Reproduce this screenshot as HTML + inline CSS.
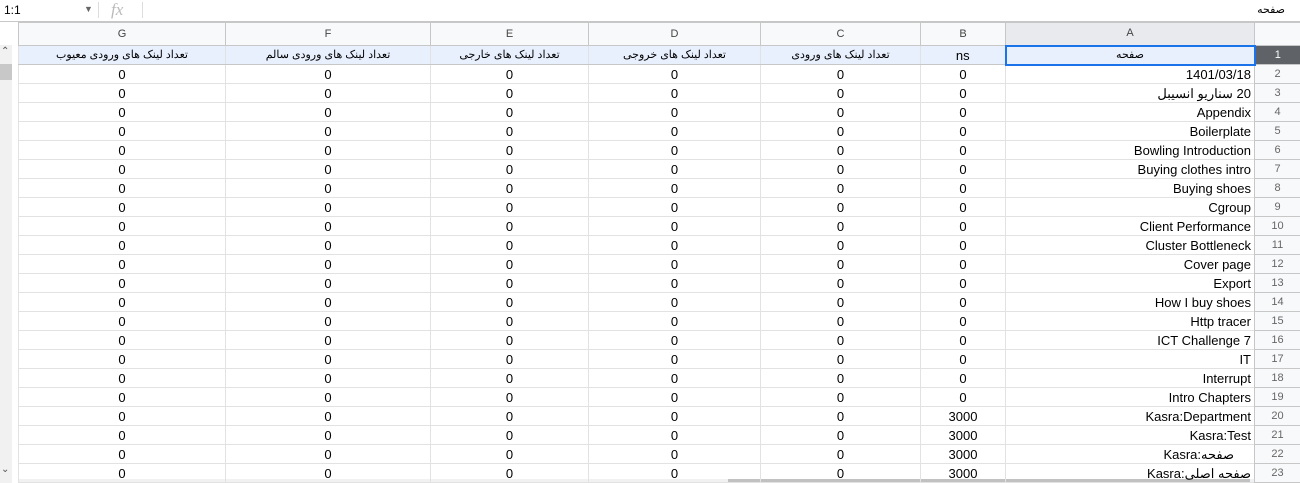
<!DOCTYPE html>
<html><head><meta charset="utf-8"><style>
*{margin:0;padding:0;box-sizing:border-box}
body{width:1300px;height:483px;overflow:hidden;background:#fff;font-family:"Liberation Sans","Noto Sans CJK SC",sans-serif;position:relative}
.fb{position:absolute;left:0;top:0;width:1300px;height:22px;border-bottom:1px solid #c7c7c7;font-size:12px}
table{position:absolute;left:18px;top:22px;width:1282px;border-collapse:collapse;table-layout:fixed;direction:rtl}
td{height:19px;border:1px solid #e2e2e2;font-size:13px;color:#000;text-align:center;white-space:nowrap;overflow:hidden;padding:0 3px;line-height:17px}
tr.h td{height:23px;background:#f8f9fa;color:#444;font-size:11px;border-color:#c7c7c7}
tr.r1 td{background:#e8f0fe;font-size:11px;border-bottom:1px solid #c7c7c7}
td.n{background:#f8f9fa;color:#666;font-size:11px;border-color:#c7c7c7}
td.a{text-align:right}
</style></head><body>
<div class="fb">
<span style="position:absolute;left:4px;top:3px">1:1</span>
<span style="position:absolute;left:84px;top:4px;font-size:9px;color:#666">▼</span>
<div style="position:absolute;left:98px;top:2px;width:1px;height:16px;background:#ddd"></div>
<span style="position:absolute;left:111px;top:0px;font-size:17px;color:#bbb;font-style:italic;font-family:'Liberation Serif',serif">fx</span>
<div style="position:absolute;left:142px;top:2px;width:1px;height:16px;background:#ddd"></div>
<span style="position:absolute;right:15px;top:3px;font-size:11px">صفحه</span>
</div>
<div style="position:absolute;left:0;top:45px;width:12px;height:438px;background:#f1f1f1"></div>
<div style="position:absolute;left:0;top:64px;width:12px;height:16px;background:#c8c8c8"></div>
<div style="position:absolute;left:1px;top:46px;font-size:10px;color:#555">⌃</div>
<div style="position:absolute;left:1px;top:464px;font-size:10px;color:#555">⌄</div>
<div style="position:absolute;left:18px;top:479px;width:1236px;height:4px;background:#f1f1f1"></div>
<div style="position:absolute;left:728px;top:479px;width:522px;height:4px;background:#c1c1c1"></div>
<table>
<colgroup><col style="width:46px"><col style="width:249px"><col style="width:85px"><col style="width:160px"><col style="width:172px"><col style="width:158px"><col style="width:205px"><col style="width:207px"></colgroup>
<tr class="h"><td style="background:#f8f9fa"></td><td style="background:#e8eaed">A</td><td>B</td><td>C</td><td>D</td><td>E</td><td>F</td><td>G</td></tr>
<tr class="r1"><td class="n" style="background:#5f6368;color:#fff">1</td><td style="border:2px solid #1a73e8">صفحه</td><td style="font-size:13px">ns</td><td>تعداد لینک های ورودی</td><td>تعداد لینک های خروجی</td><td>تعداد لینک های خارجی</td><td>تعداد لینک های ورودی سالم</td><td>تعداد لینک های ورودی معیوب</td></tr>
<tr><td class="n">2</td><td class="a">1401/03/18</td><td>0</td><td>0</td><td>0</td><td>0</td><td>0</td><td>0</td></tr>
<tr><td class="n">3</td><td class="a">20 سناریو انسیبل</td><td>0</td><td>0</td><td>0</td><td>0</td><td>0</td><td>0</td></tr>
<tr><td class="n">4</td><td class="a">Appendix</td><td>0</td><td>0</td><td>0</td><td>0</td><td>0</td><td>0</td></tr>
<tr><td class="n">5</td><td class="a">Boilerplate</td><td>0</td><td>0</td><td>0</td><td>0</td><td>0</td><td>0</td></tr>
<tr><td class="n">6</td><td class="a">Bowling Introduction</td><td>0</td><td>0</td><td>0</td><td>0</td><td>0</td><td>0</td></tr>
<tr><td class="n">7</td><td class="a">Buying clothes intro</td><td>0</td><td>0</td><td>0</td><td>0</td><td>0</td><td>0</td></tr>
<tr><td class="n">8</td><td class="a">Buying shoes</td><td>0</td><td>0</td><td>0</td><td>0</td><td>0</td><td>0</td></tr>
<tr><td class="n">9</td><td class="a">Cgroup</td><td>0</td><td>0</td><td>0</td><td>0</td><td>0</td><td>0</td></tr>
<tr><td class="n">10</td><td class="a">Client Performance</td><td>0</td><td>0</td><td>0</td><td>0</td><td>0</td><td>0</td></tr>
<tr><td class="n">11</td><td class="a">Cluster Bottleneck</td><td>0</td><td>0</td><td>0</td><td>0</td><td>0</td><td>0</td></tr>
<tr><td class="n">12</td><td class="a">Cover page</td><td>0</td><td>0</td><td>0</td><td>0</td><td>0</td><td>0</td></tr>
<tr><td class="n">13</td><td class="a">Export</td><td>0</td><td>0</td><td>0</td><td>0</td><td>0</td><td>0</td></tr>
<tr><td class="n">14</td><td class="a">How I buy shoes</td><td>0</td><td>0</td><td>0</td><td>0</td><td>0</td><td>0</td></tr>
<tr><td class="n">15</td><td class="a">Http tracer</td><td>0</td><td>0</td><td>0</td><td>0</td><td>0</td><td>0</td></tr>
<tr><td class="n">16</td><td class="a">ICT Challenge 7</td><td>0</td><td>0</td><td>0</td><td>0</td><td>0</td><td>0</td></tr>
<tr><td class="n">17</td><td class="a">IT</td><td>0</td><td>0</td><td>0</td><td>0</td><td>0</td><td>0</td></tr>
<tr><td class="n">18</td><td class="a">Interrupt</td><td>0</td><td>0</td><td>0</td><td>0</td><td>0</td><td>0</td></tr>
<tr><td class="n">19</td><td class="a">Intro Chapters</td><td>0</td><td>0</td><td>0</td><td>0</td><td>0</td><td>0</td></tr>
<tr><td class="n">20</td><td class="a">Kasra:Department</td><td>3000</td><td>0</td><td>0</td><td>0</td><td>0</td><td>0</td></tr>
<tr><td class="n">21</td><td class="a">Kasra:Test</td><td>3000</td><td>0</td><td>0</td><td>0</td><td>0</td><td>0</td></tr>
<tr><td class="n">22</td><td class="a" style="padding-right:20px">&#x202A;Kasra:صفحه&#x202C;</td><td>3000</td><td>0</td><td>0</td><td>0</td><td>0</td><td>0</td></tr>
<tr><td class="n">23</td><td class="a">&#x202A;Kasra:صفحه اصلی&#x202C;</td><td>3000</td><td>0</td><td>0</td><td>0</td><td>0</td><td>0</td></tr>
</table>
</body></html>
